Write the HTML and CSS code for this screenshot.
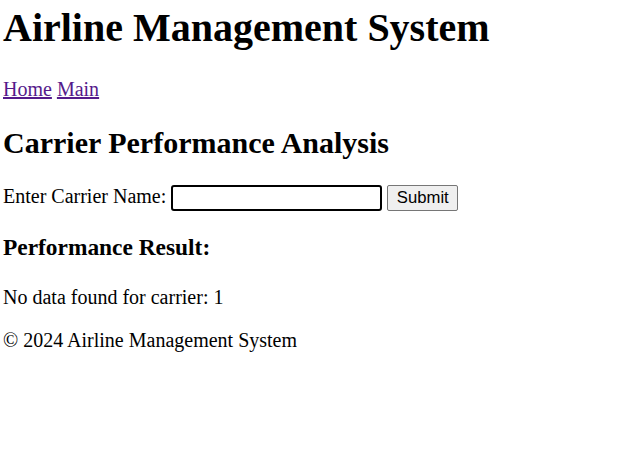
FILE: index.html
```html
<!DOCTYPE html>
<html>
<head>
<meta charset="utf-8">
<title>Carrier Performance Analysis</title>
<link rel="stylesheet" href="styles.css">
</head>
<body>
<header>
<h1 class="title">Airline Management System</h1>
<nav class="nav"><a class="visited" href="#">Home</a> <a class="visited" href="#">Main</a></nav>
</header>
<main>
<h2 class="section-title">Carrier Performance Analysis</h2>
<form class="search" onsubmit="return false">
<label for="carrier">Enter Carrier Name:</label>
<input id="carrier" class="field" type="text">
<button class="btn" type="submit">Submit</button>
</form>
<h3 class="result-title">Performance Result:</h3>
<p class="result">No data found for carrier: 1</p>
</main>
<footer>
<p class="copy">© 2024 Airline Management System</p>
</footer>
</body>
</html>
```
FILE: styles.css
```css
body {
  font-family: "Liberation Serif", "Times New Roman", serif;
  font-size: 20px;
  margin: 0 3px;
  color: #000;
  background: #fff;
}
.title {
  font-size: 40px;
  margin: 4px 0 26.8px;
}
.nav {
  margin: 20px 0;
}
a.visited {
  color: #551a8b;
}
.section-title {
  font-size: 30px;
}
.result-title {
  font-size: 23.4px;
  margin-bottom: 25.4px;
}
.result {
  margin: 25.4px 0 20px;
}
.copy {
  margin: 19px 0 20px;
}
.field {
  box-sizing: border-box;
  width: 211px;
  height: 26px;
  border: 2px solid #000;
  border-radius: 3px;
  padding: 1px 3px;
  vertical-align: baseline;
  outline: none;
  font-family: "Liberation Sans", Arial, sans-serif;
  font-size: 16.7px;
}
.btn {
  box-sizing: border-box;
  width: 71px;
  height: 26px;
  padding: 0;
  background: #efefef;
  border: 1px solid #767676;
  border-radius: 2px;
  color: #000;
  font-family: "Liberation Sans", Arial, sans-serif;
  font-size: 16.7px;
}
```
